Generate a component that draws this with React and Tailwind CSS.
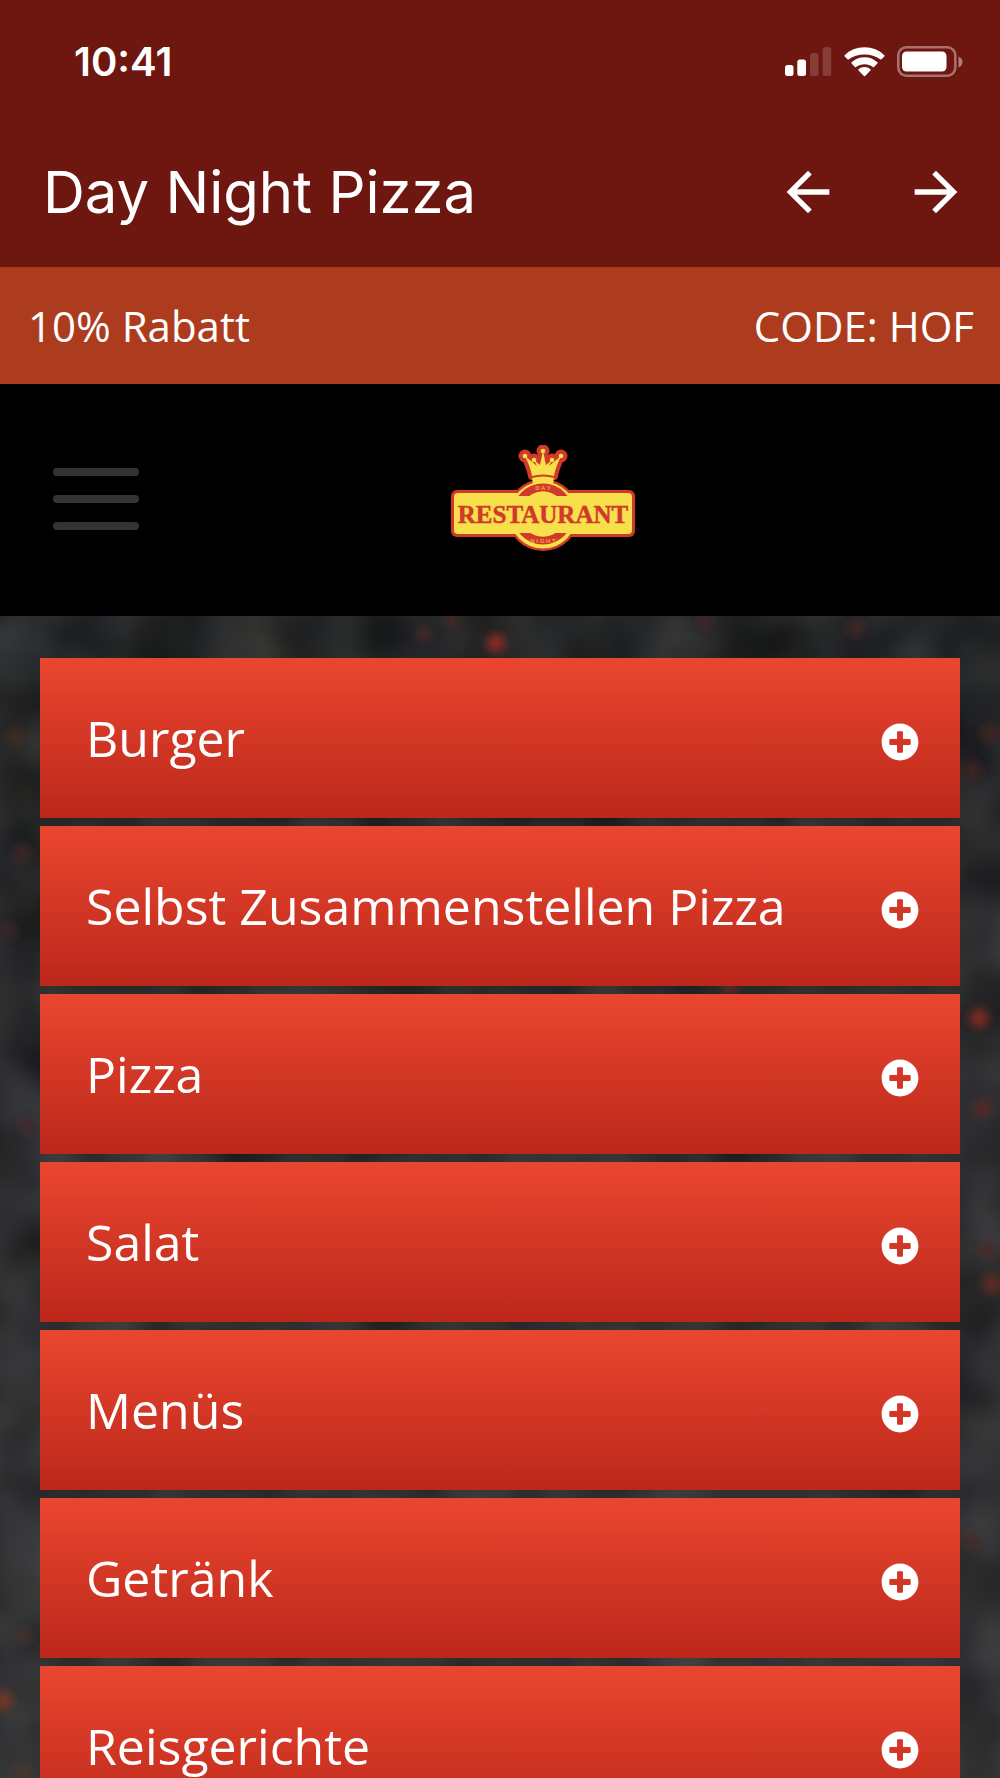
import React from 'react';
import { FaPlusCircle } from 'react-icons/fa';
import { MdArrowBack, MdArrowForward } from 'react-icons/md';

const categories = [
  'Burger',
  'Selbst Zusammenstellen Pizza',
  'Pizza',
  'Salat',
  'Menüs',
  'Getränk',
  'Reisgerichte',
];

// glowing embers in the stone background: x, y, size, colour
const embers = [
  [496, 27, 9, '#8f2c27'],
  [424, 18, 7, '#4c2929'],
  [452, 5, 6, '#4f2826'],
  [706, 6, 7, '#43272b'],
  [856, 12, 8, '#452525'],
  [15, 121, 7, '#4c2d23'],
  [22, 238, 9, '#3c2728'],
  [8, 315, 8, '#3e2828'],
  [28, 510, 8, '#452a2c'],
  [979, 402, 10, '#7c2b20'],
  [983, 492, 9, '#592723'],
  [990, 118, 9, '#402520'],
  [972, 154, 9, '#402420'],
  [3, 1085, 10, '#703828'],
  [24, 1020, 7, '#4a322a'],
  [22, 1155, 8, '#48362a'],
  [988, 634, 8, '#4b2a27'],
  [992, 668, 10, '#5b2a24'],
  [972, 925, 8, '#452926'],
  [730, 372, 7, '#6a2b24'],
];

const crownPath = 'M82 31C81 24 78 18 75 11L87 21L84 15L90 20L93 6L96 20L102 15L99 21L111 11C108 18 105 24 104 31Q93 28 82 31Z';

const crownTips = [
  [75, 11],
  [84, 15],
  [93, 6],
  [102, 15],
  [111, 11],
];

function StatusIcons() {
  return (
    <div className="flex items-center gap-3">
      <svg width="47" height="30" viewBox="0 0 47 30" fill="white" aria-hidden="true">
        <rect x="0" y="18" width="8.5" height="11" rx="2.5" />
        <rect x="12.3" y="12.5" width="8.7" height="16.5" rx="2.5" />
        <rect x="25" y="6" width="8.5" height="23" rx="2.5" opacity="0.17" />
        <rect x="37.7" y="0" width="8.5" height="29" rx="2.5" opacity="0.17" />
      </svg>
      <svg width="41" height="30" viewBox="0 0 42 30" fill="white" aria-hidden="true">
        <path d="M21 0C13 0 5.8 3 .7 8.1Q.1 8.7 .7 9.3L3.6 12.2Q4.200 12.8 4.9 12.2C9.2 8.8 14.9 7.2 21 7.2S32.8 8.8 37.1 12.2Q37.8 12.8 38.4 12.2L41.3 9.3Q41.9 8.7 41.3 8.1C36.2 3 29 0 21 0Z" />
        <path d="M21 10.2C15.8 10.2 11.2 12.1 7.8 15.3Q7.2 15.9 7.8 16.5L11.2 20Q11.8 20.5 12.5 20C14.9 18.2 17.8 17.2 21 17.2S27.1 18.2 29.5 20Q30.2 20.5 30.8 20L34.2 16.5Q34.8 15.9 34.2 15.3C30.8 12.1 26.2 10.2 21 10.2Z" />
        <path d="M21 20.2C18.6 20.2 16.6 21 14.9 22.4Q14.3 23 14.9 23.6L20.4 29.4Q21 30 21.6 29.4L27.1 23.6Q27.7 23 27.1 22.4C25.4 21 23.4 20.2 21 20.2Z" />
      </svg>
      <svg width="67" height="32" viewBox="0 0 67 32" aria-hidden="true">
        <rect x="1.3" y="1.3" width="57" height="28.5" rx="8" fill="none" stroke="white" strokeWidth="2.5" opacity="0.4" />
        <rect x="5" y="5.5" width="44.5" height="20" rx="4.5" fill="white" />
        <path d="M61.5 10.5C64 11.5 65.5 13.5 65.5 16S64 20.5 61.5 21.5Z" fill="white" opacity="0.45" />
      </svg>
    </div>
  );
}

function Logo() {
  return (
    <svg width="186" height="108" viewBox="0 0 186 108" role="img" aria-label="Day Night Restaurant">
      {/* Red outline */}
      <g fill="#d13a2b">
        <circle cx="93" cy="70" r="36" />
        <rect x="1" y="45" width="184" height="47" rx="6" />
        <path d={crownPath} stroke="#d13a2b" strokeWidth="8" strokeLinejoin="round" />
        {crownTips.map(([x, y]) => (
          <circle key={x} cx={x} cy={y} r="6.5" />
        ))}
      </g>
      {/* Crown and sign */}
      <g fill="#f7e04b">
        <path d={crownPath} />
        {crownTips.map(([x, y]) => (
          <circle key={x} cx={x} cy={y} r="2.3" />
        ))}
        <path d="M82 33Q93 30 104 33L103 39H83Z" />
        <circle cx="93" cy="70" r="33.5" />
        <rect x="4" y="48" width="178" height="41" rx="4" />
      </g>
      <circle cx="93" cy="69" r="26.5" fill="none" stroke="#d13a2b" strokeWidth="8" />
      <rect x="14" y="51" width="158" height="37" fill="#f7e04b" />
      <circle cx="93" cy="69" r="22.5" fill="#f7e04b" />
      <g fill="#f0a640" fontFamily="Liberation Sans" fontWeight="700" fontSize="6" textAnchor="middle">
        <text x="93" y="45">D A Y</text>
        <text x="93" y="98">N I G H T</text>
      </g>
      <text x="93" y="78" textAnchor="middle" fontFamily="Liberation Serif" fontWeight="700" fontSize="25" fill="#d13a2b" stroke="#d13a2b" strokeWidth="0.5">RESTAURANT</text>
    </svg>
  );
}

function StoneBackground() {
  return (
    <svg className="absolute inset-0 h-full w-full" aria-hidden="true">
      <defs>
        <linearGradient id="stone" x1="0" y1="0" x2="0" y2="1">
          <stop offset="0" stopColor="#222324" />
          <stop offset="0.5" stopColor="#343436" />
          <stop offset="1" stopColor="#424243" />
        </linearGradient>
        <filter id="grain" x="0" y="0" width="100%" height="100%" colorInterpolationFilters="sRGB">
          <feTurbulence type="fractalNoise" baseFrequency="0.014" numOctaves="2" seed="4" />
          <feColorMatrix values="0.36 0 0 0 -0.02  0.36 0 0 0 -0.015  0.34 0 0.1 0 -0.05  0 0 0 0 0.55" />
        </filter>
        <filter id="soft" x="-100%" y="-100%" width="300%" height="300%">
          <feGaussianBlur stdDeviation="5" />
        </filter>
      </defs>
      <rect width="100%" height="100%" fill="url(#stone)" />
      <rect width="100%" height="100%" filter="url(#grain)" />
      {embers.map(([x, y, r, color]) => (
        <circle key={`${x}-${y}`} cx={x} cy={y} r={r} fill={color} filter="url(#soft)" />
      ))}
    </svg>
  );
}

function App() {
  return (
    <div className="flex h-screen flex-col overflow-hidden bg-black font-['Open_Sans',sans-serif] text-white">

      {/* Status bar and title */}
      <header className="shrink-0 bg-[#6e1610] font-['Inter',sans-serif]">
        <div className="flex h-[123px] items-center justify-between pl-[74px] pr-9">
          <span className="text-[40px] font-semibold leading-none">10:41</span>
          <StatusIcons />
        </div>
        <div className="flex h-36 items-start justify-between pl-[43px] pr-8">
          <h1 className="pt-10 text-[58px] leading-none">Day Night Pizza</h1>
          <div className="flex gap-16 pt-[37px]">
            <button aria-label="Zurück"><MdArrowBack size={64} /></button>
            <button aria-label="Vor"><MdArrowForward size={64} /></button>
          </div>
        </div>
      </header>

      {/* Discount code */}
      <div className="flex h-[117px] shrink-0 items-center justify-between bg-[#ad3c1f] pl-7 pr-[26px] text-[42px]">
        <span>10% Rabatt</span>
        <span>CODE: HOF</span>
      </div>

      {/* Menu and logo */}
      <nav className="grid h-[232px] shrink-0 grid-cols-[86px_1fr] items-center bg-black px-[53px] pb-0.5">
        <button aria-label="Menü" className="flex flex-col gap-[19px]">
          <span className="h-2 w-full rounded-full bg-[#333333]" />
          <span className="h-2 w-full rounded-full bg-[#333333]" />
          <span className="h-2 w-full rounded-full bg-[#333333]" />
        </button>
        <a href="#" className="justify-self-center"><Logo /></a>
      </nav>

      {/* Categories */}
      <main className="relative min-h-0 flex-1 overflow-y-auto [scrollbar-width:none]">
        <div className="relative">
          <StoneBackground />
          <ul className="relative flex flex-col gap-2 px-10 pb-10 pt-[42px]">
            {categories.map((name) => (
              <li key={name}>
                <button className="flex h-40 w-full items-center justify-between bg-linear-to-b from-[#ea462f] to-[#bc271b] pl-[46px] pr-[41px] text-left text-[50px]">
                  <span>{name}</span>
                  <FaPlusCircle size={38} className="mt-2" />
                </button>
              </li>
            ))}
          </ul>
        </div>
      </main>
    </div>
  );
}

export default App;
